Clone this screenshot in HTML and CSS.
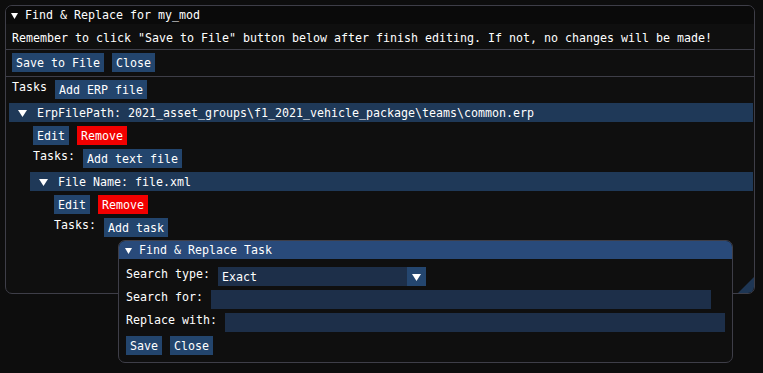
FILE: index.html
```html
<!DOCTYPE html>
<html>
<head>
<meta charset="utf-8">
<link rel="stylesheet" href="styles.css">
</head>
<body>
<section class="win win-main">
  <header class="title">
    <svg class="arrow-s" width="7" height="6" viewBox="0 0 7 6"><polygon points="0,0 7,0 3.5,6" fill="#fff"/></svg>
    <span class="title-text">Find &amp; Replace for my_mod</span>
  </header>
  <div class="body">
    <p class="text notice">Remember to click "Save to File" button below after finish editing. If not, no changes will be made!</p>
    <div class="sep sep-a"></div>
    <div class="row row-a"><button class="btn">Save to File</button><button class="btn">Close</button></div>
    <div class="sep sep-b"></div>
    <div class="row row-b"><span class="text">Tasks</span><button class="btn">Add ERP file</button></div>
    <div class="hdr">
      <svg class="arrow" width="9" height="7" viewBox="0 0 9 7"><polygon points="0,0 9,0 4.5,7" fill="#fff"/></svg>
      <span>ErpFilePath: 2021_asset_groups\f1_2021_vehicle_package\teams\common.erp</span>
    </div>
    <div class="indent">
      <div class="row"><button class="btn">Edit</button><button class="btn btn-red">Remove</button></div>
      <div class="row"><span class="text">Tasks:</span><button class="btn">Add text file</button></div>
      <div class="hdr">
        <svg class="arrow" width="9" height="7" viewBox="0 0 9 7"><polygon points="0,0 9,0 4.5,7" fill="#fff"/></svg>
        <span>File Name: file.xml</span>
      </div>
      <div class="indent">
        <div class="row"><button class="btn">Edit</button><button class="btn btn-red">Remove</button></div>
        <div class="row"><span class="text">Tasks:</span><button class="btn">Add task</button></div>
      </div>
    </div>
  </div>
  <svg class="grip" width="16" height="16" viewBox="0 0 16 16"><path d="M0 16 L16 0 L16 10 Q16 16 10 16 Z" fill="#1e3654"/></svg>
</section>

<section class="win win-task">
  <header class="title title-active">
    <svg class="arrow-s" width="7" height="6" viewBox="0 0 7 6"><polygon points="0,0 7,0 3.5,6" fill="#fff"/></svg>
    <span class="title-text">Find &amp; Replace Task</span>
  </header>
  <div class="body task-body">
    <div class="row">
      <span class="text">Search type:</span>
      <div class="combo">
        <span class="combo-val">Exact</span>
        <span class="combo-btn"><svg width="9" height="7" viewBox="0 0 9 7"><polygon points="0,0 9,0 4.5,7" fill="#fff"/></svg></span>
      </div>
    </div>
    <div class="row"><span class="text">Search for:</span><div class="input"></div></div>
    <div class="row"><span class="text">Replace with:</span><div class="input"></div></div>
    <div class="row"><button class="btn">Save</button><button class="btn">Close</button></div>
  </div>
</section>
</body>
</html>
```
FILE: styles.css
```css
* { box-sizing: border-box; margin: 0; padding: 0; }

html, body { width: 763px; height: 373px; overflow: hidden; }

body {
  position: relative;
  background: #0d0d0d;
  color: #fff;
  font-family: "DejaVu Sans Mono", "Liberation Mono", monospace;
  font-size: 11.63px;
  line-height: 13px;
}

.win {
  position: absolute;
  display: flex;
  flex-direction: column;
  border: 1px solid #3e3e48;
  background: #0f0f0f;
  border-radius: 7px;
  overflow: hidden;
}

.win-main { left: 5px; top: 5px; width: 750px; height: 289px; }
.win-task { left: 118px; top: 240px; width: 615px; height: 123px; }

.title {
  flex: none;
  height: 18px;
  display: flex;
  align-items: center;
  gap: 7px;
  padding: 1px 0 0 5px;
  background: #0a0a0a;
  white-space: pre;
}
.title-active { background: #294a7a; padding-left: 6px; }
.title-text { line-height: 13px; }

.body {
  display: flex;
  flex-direction: column;
  gap: 4px;
  padding: 7px 6px 0;
}

.text { line-height: 13px; padding-top: 1px; white-space: pre; }

.sep { height: 1px; background: #3e3e48; margin: 0 -6px; }
.body .sep-a { margin-top: 0; }
.body .row-a { margin-top: -1px; }
.body .row-b { margin-top: -1px; }

.row {
  display: flex;
  align-items: flex-start;
  gap: 8px;
}

.btn {
  height: 19px;
  padding: 4px 4px 2px;
  border: none;
  background: #23456d;
  color: #fff;
  font: inherit;
  line-height: 13px;
  white-space: pre;
}
.btn-red { background: #f20000; }

.hdr {
  height: 19px;
  display: flex;
  align-items: center;
  gap: 10px;
  padding: 2px 0 0 9px;
  margin: 0 -5px 0 -3px;
  background: #1f3958;
  white-space: pre;
}
.arrow { flex: none; }

.indent {
  display: flex;
  flex-direction: column;
  gap: 4px;
  padding-left: 21px;
}
.indent .hdr { margin-right: -5px; }

.grip { position: absolute; right: 0; bottom: 0; }

.task-body { padding: 8px 7px 0; }

.combo {
  width: 208px;
  height: 19px;
  display: flex;
  background: #1d2f49;
}
.combo-val { flex: 1; padding: 4px 4px 2px; line-height: 13px; }
.combo-btn {
  width: 19px;
  height: 19px;
  display: flex;
  align-items: center;
  justify-content: center;
  padding-top: 1px;
  background: #24466f;
}

.input { width: 500px; height: 19px; background: #1d2f49; }
```
